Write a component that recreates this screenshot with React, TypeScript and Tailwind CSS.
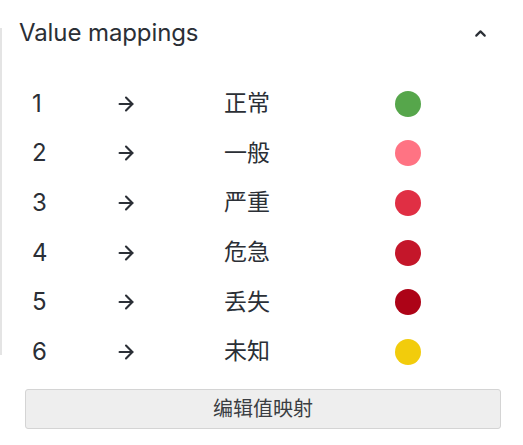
import { ArrowRight, ChevronUp } from "lucide-react"

const mappings = [
    { value: "1", text: "正常", color: "bg-[#56a64b]" },
    { value: "2", text: "一般", color: "bg-[#ff7383]" },
    { value: "3", text: "严重", color: "bg-[#e02f44]" },
    { value: "4", text: "危急", color: "bg-[#c4162a]" },
    { value: "5", text: "丢失", color: "bg-[#ad0317]" },
    { value: "6", text: "未知", color: "bg-[#f2cc0c]" },
]

export default function App() {
    return (
        <div className="w-[523px] h-[445px] bg-white flex text-[#2b2f36]" style={{ fontFamily: '"Inter", "Noto Sans CJK SC", sans-serif' }}>
            <div className="w-[2px] h-[327px] mt-[28px] bg-[#e4e4e4] shrink-0" />
            <div className="flex-1 flex flex-col">
                <div className="flex items-center justify-between h-[32px] mt-[17px] pl-[17px] pr-[34px]">
                    <span className="text-[24px] leading-none tracking-[-0.1px]">Value mappings</span>
                    <ChevronUp size={17} strokeWidth={3} className="text-[#2b2f36]" />
                </div>
                <div className="flex flex-col mt-[30px]">
                    {mappings.map(m => (
                        <div key={m.value} className="grid grid-cols-[83px_109px_171px_26px] items-center h-[49.6px] pl-[30px]">
                            <span className="text-[24px] leading-none">{m.value}</span>
                            <ArrowRight size={22} strokeWidth={2.3} />
                            <span className="text-[23px] leading-none">{m.text}</span>
                            <span className={`size-[26px] rounded-full ${m.color}`} />
                        </div>
                    ))}
                </div>
                <button className="mt-[12px] ml-[23px] w-[476px] h-[40px] bg-[#eeeeee] border border-[#d4d4d4] rounded-[3px] text-[20px] text-[#3a3d42] flex items-center justify-center">
                    编辑值映射
                </button>
            </div>
        </div>
    )
}
